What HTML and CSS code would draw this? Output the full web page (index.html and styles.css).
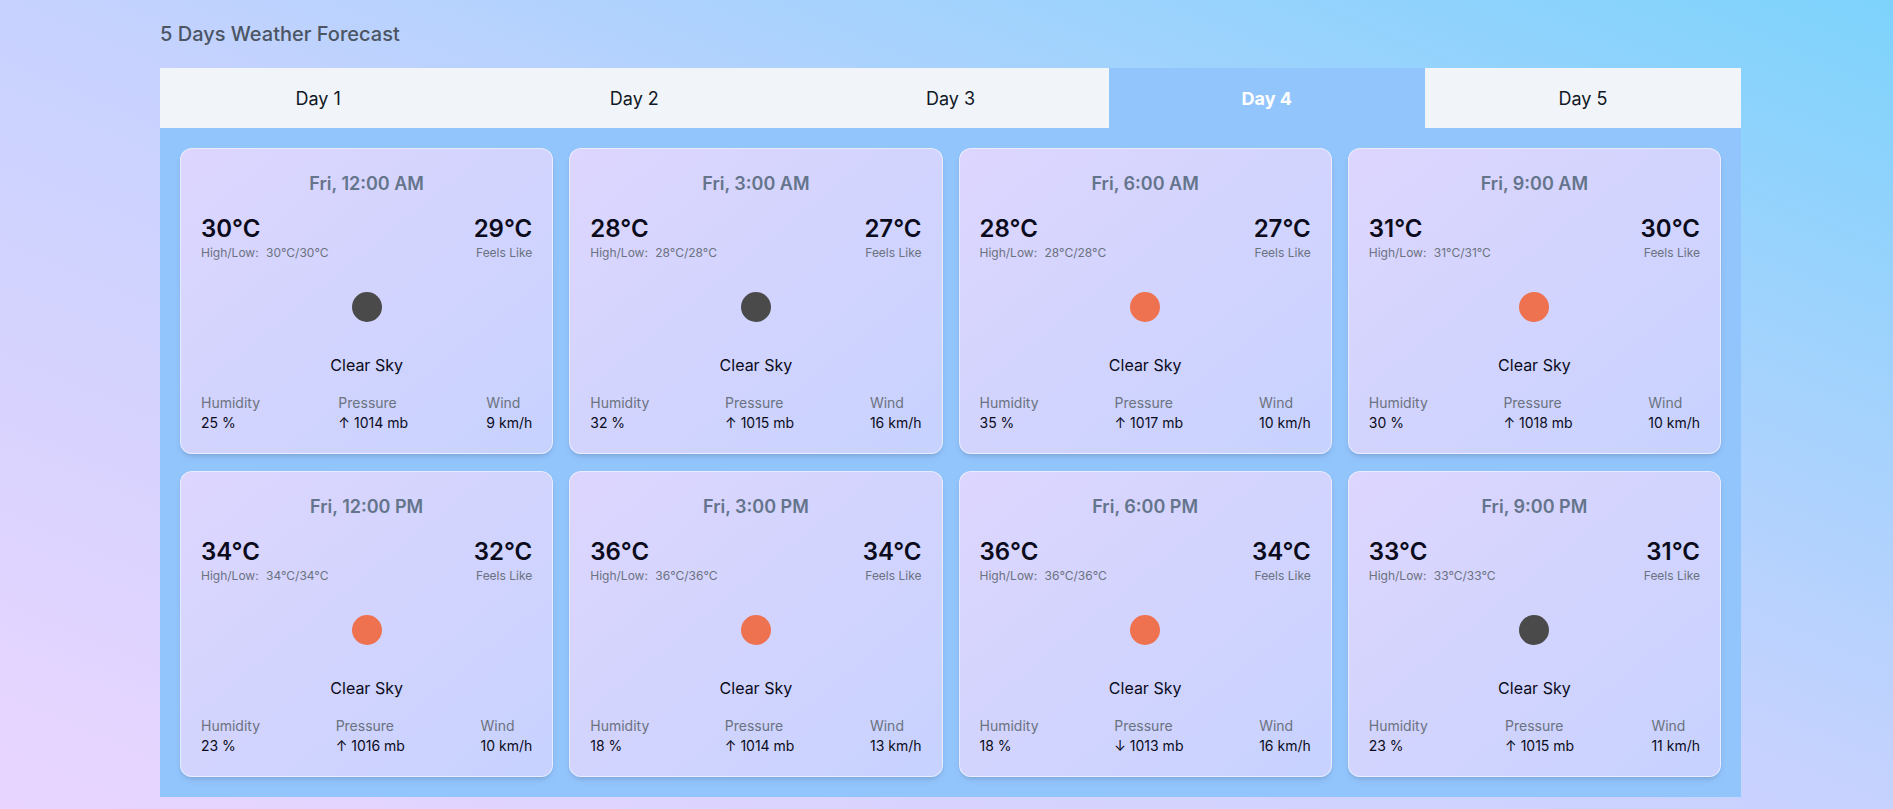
FILE: index.html
```html
<!DOCTYPE html>
<html lang="en">
<head>
<meta charset="utf-8">
<title>5 Days Weather Forecast</title>
<link rel="stylesheet" href="styles.css">
</head>
<body>
<main class="page">
  <h1 class="title">5 Days Weather Forecast</h1>
  <section class="forecast">
    <nav class="tabs">
      <div class="tab">Day 1</div>
      <div class="tab">Day 2</div>
      <div class="tab">Day 3</div>
      <div class="tab active">Day 4</div>
      <div class="tab">Day 5</div>
    </nav>
    <div class="grid">
      <article class="card">
        <div class="date">Fri, 12:00 AM</div>
        <div class="temps">
          <div class="temp-main"><div class="temp">30°C</div><div class="sub">High/Low: <span class="hl">30°C/30°C</span></div></div>
          <div class="temp-feel"><div class="temp">29°C</div><div class="sub">Feels Like</div></div>
        </div>
        <div class="icon"><span class="dot night"></span></div>
        <div class="desc">Clear Sky</div>
        <div class="stats">
          <div class="stat"><div class="label">Humidity</div><div class="value">25 %</div></div>
          <div class="stat"><div class="label">Pressure</div><div class="value">↑ 1014 mb</div></div>
          <div class="stat"><div class="label">Wind</div><div class="value">9 km/h</div></div>
        </div>
      </article>
      <article class="card">
        <div class="date">Fri, 3:00 AM</div>
        <div class="temps">
          <div class="temp-main"><div class="temp">28°C</div><div class="sub">High/Low: <span class="hl">28°C/28°C</span></div></div>
          <div class="temp-feel"><div class="temp">27°C</div><div class="sub">Feels Like</div></div>
        </div>
        <div class="icon"><span class="dot night"></span></div>
        <div class="desc">Clear Sky</div>
        <div class="stats">
          <div class="stat"><div class="label">Humidity</div><div class="value">32 %</div></div>
          <div class="stat"><div class="label">Pressure</div><div class="value">↑ 1015 mb</div></div>
          <div class="stat"><div class="label">Wind</div><div class="value">16 km/h</div></div>
        </div>
      </article>
      <article class="card">
        <div class="date">Fri, 6:00 AM</div>
        <div class="temps">
          <div class="temp-main"><div class="temp">28°C</div><div class="sub">High/Low: <span class="hl">28°C/28°C</span></div></div>
          <div class="temp-feel"><div class="temp">27°C</div><div class="sub">Feels Like</div></div>
        </div>
        <div class="icon"><span class="dot day"></span></div>
        <div class="desc">Clear Sky</div>
        <div class="stats">
          <div class="stat"><div class="label">Humidity</div><div class="value">35 %</div></div>
          <div class="stat"><div class="label">Pressure</div><div class="value">↑ 1017 mb</div></div>
          <div class="stat"><div class="label">Wind</div><div class="value">10 km/h</div></div>
        </div>
      </article>
      <article class="card">
        <div class="date">Fri, 9:00 AM</div>
        <div class="temps">
          <div class="temp-main"><div class="temp">31°C</div><div class="sub">High/Low: <span class="hl">31°C/31°C</span></div></div>
          <div class="temp-feel"><div class="temp">30°C</div><div class="sub">Feels Like</div></div>
        </div>
        <div class="icon"><span class="dot day"></span></div>
        <div class="desc">Clear Sky</div>
        <div class="stats">
          <div class="stat"><div class="label">Humidity</div><div class="value">30 %</div></div>
          <div class="stat"><div class="label">Pressure</div><div class="value">↑ 1018 mb</div></div>
          <div class="stat"><div class="label">Wind</div><div class="value">10 km/h</div></div>
        </div>
      </article>
      <article class="card">
        <div class="date">Fri, 12:00 PM</div>
        <div class="temps">
          <div class="temp-main"><div class="temp">34°C</div><div class="sub">High/Low: <span class="hl">34°C/34°C</span></div></div>
          <div class="temp-feel"><div class="temp">32°C</div><div class="sub">Feels Like</div></div>
        </div>
        <div class="icon"><span class="dot day"></span></div>
        <div class="desc">Clear Sky</div>
        <div class="stats">
          <div class="stat"><div class="label">Humidity</div><div class="value">23 %</div></div>
          <div class="stat"><div class="label">Pressure</div><div class="value">↑ 1016 mb</div></div>
          <div class="stat"><div class="label">Wind</div><div class="value">10 km/h</div></div>
        </div>
      </article>
      <article class="card">
        <div class="date">Fri, 3:00 PM</div>
        <div class="temps">
          <div class="temp-main"><div class="temp">36°C</div><div class="sub">High/Low: <span class="hl">36°C/36°C</span></div></div>
          <div class="temp-feel"><div class="temp">34°C</div><div class="sub">Feels Like</div></div>
        </div>
        <div class="icon"><span class="dot day"></span></div>
        <div class="desc">Clear Sky</div>
        <div class="stats">
          <div class="stat"><div class="label">Humidity</div><div class="value">18 %</div></div>
          <div class="stat"><div class="label">Pressure</div><div class="value">↑ 1014 mb</div></div>
          <div class="stat"><div class="label">Wind</div><div class="value">13 km/h</div></div>
        </div>
      </article>
      <article class="card">
        <div class="date">Fri, 6:00 PM</div>
        <div class="temps">
          <div class="temp-main"><div class="temp">36°C</div><div class="sub">High/Low: <span class="hl">36°C/36°C</span></div></div>
          <div class="temp-feel"><div class="temp">34°C</div><div class="sub">Feels Like</div></div>
        </div>
        <div class="icon"><span class="dot day"></span></div>
        <div class="desc">Clear Sky</div>
        <div class="stats">
          <div class="stat"><div class="label">Humidity</div><div class="value">18 %</div></div>
          <div class="stat"><div class="label">Pressure</div><div class="value">↓ 1013 mb</div></div>
          <div class="stat"><div class="label">Wind</div><div class="value">16 km/h</div></div>
        </div>
      </article>
      <article class="card">
        <div class="date">Fri, 9:00 PM</div>
        <div class="temps">
          <div class="temp-main"><div class="temp">33°C</div><div class="sub">High/Low: <span class="hl">33°C/33°C</span></div></div>
          <div class="temp-feel"><div class="temp">31°C</div><div class="sub">Feels Like</div></div>
        </div>
        <div class="icon"><span class="dot night"></span></div>
        <div class="desc">Clear Sky</div>
        <div class="stats">
          <div class="stat"><div class="label">Humidity</div><div class="value">23 %</div></div>
          <div class="stat"><div class="label">Pressure</div><div class="value">↑ 1015 mb</div></div>
          <div class="stat"><div class="label">Wind</div><div class="value">11 km/h</div></div>
        </div>
      </article>
    </div>
  </section>
</main>
</body>
</html>
```

FILE: styles.css
```css
* { box-sizing: border-box; }
html, body { margin: 0; padding: 0; }
body {
  min-height: 100vh;
  font-family: Inter, "Noto Sans", "Liberation Sans", sans-serif;
  color: #0f0f1e;
  background: linear-gradient(to top right, #e9d5ff 0%, #c7d2fe 50%, #7dd3fc 100%);
}
.page {
  padding: 20px 152px 13px 160px;
}
.title {
  margin: 0 0 20px;
  font-size: 20px;
  line-height: 28px;
  font-weight: 500;
  color: #4b5563;
}
.forecast {
  background: #93c5fd;
}
.tabs {
  display: flex;
  background: #f1f5f9;
}
.tab {
  flex: 1;
  height: 60px;
  display: flex;
  align-items: center;
  justify-content: center;
  font-size: 18px;
  color: #111827;
}
.tab.active {
  background: #93c5fd;
  color: #ffffff;
  font-weight: 700;
}
.grid {
  display: grid;
  grid-template-columns: repeat(4, 1fr);
  gap: 17px 16px;
  padding: 20px;
}
.card {
  border: 1px solid rgba(255, 255, 255, 0.55);
  border-radius: 12px;
  padding: 21px 20px 20px;
  background: linear-gradient(to bottom right, #ddd6fe, #c7d2fe);
  box-shadow: 0 4px 6px -1px rgba(0, 0, 0, 0.1), 0 2px 4px -2px rgba(0, 0, 0, 0.1);
}
.date {
  text-align: center;
  font-size: 18px;
  line-height: 28px;
  font-weight: 600;
  color: #64748b;
  margin-bottom: 15px;
}
.temps {
  display: flex;
  justify-content: space-between;
  align-items: flex-start;
}
.temp-feel { text-align: right; }
.temp {
  font-size: 24px;
  line-height: 32px;
  font-weight: 600;
  color: #0b0b1c;
}
.sub {
  font-size: 12px;
  line-height: 16px;
  color: #6b7280;
}
.hl { margin-left: 4px; }
.icon {
  display: flex;
  justify-content: center;
  padding: 31px 0 31px;
}
.dot {
  width: 30px;
  height: 30px;
  border-radius: 50%;
}
.dot.night { background: #4a4a4a; }
.dot.day { background: #ee7150; }
.desc {
  text-align: center;
  font-size: 16px;
  line-height: 24px;
  color: #0b0b1c;
  margin-bottom: 16px;
}
.stats {
  display: flex;
  justify-content: space-between;
}
.label {
  font-size: 14px;
  line-height: 20px;
  color: #6b7280;
}
.value {
  font-size: 14px;
  line-height: 20px;
  color: #0b0b1c;
}
```
